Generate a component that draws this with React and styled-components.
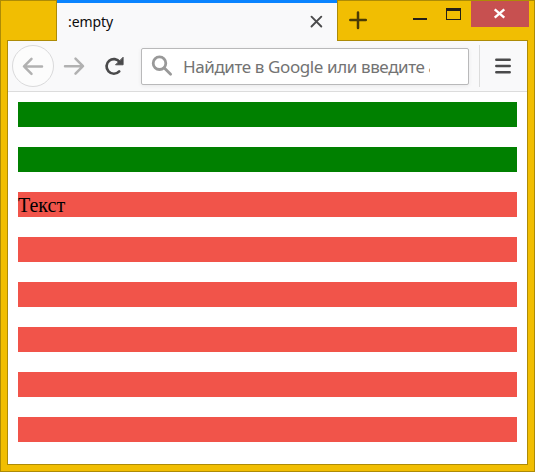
import React from "react";
import styled, { createGlobalStyle } from "styled-components";

const edge = "#ad8b06";
const gold = "#f1be02";

const GlobalStyle = createGlobalStyle`
  *, *::before, *::after { box-sizing: border-box; }
  body { margin: 0; overflow: hidden; }
  svg { display: block; flex: none; }
`;

const BrowserWindow = styled.div`
  width: 535px;
  height: 472px;
  display: flex;
  flex-direction: column;
  padding: 0 6px 6px;
  background: ${gold};
  border: 1px solid ${edge};
  border-top: 0;
  font-family: "Noto Sans", "Open Sans", sans-serif;
`;

const TitleBar = styled.header`
  flex: none;
  display: flex;
  height: 41px;
  margin: 0 -6px;
`;

const TitleStart = styled.div`
  width: 56px;
  padding-left: 6px;
  border-top: 1px solid ${edge};
  border-right: 1px solid ${edge};
  &::after {
    content: "";
    display: block;
    margin-top: 39px;
    height: 1px;
    background: ${edge};
  }
`;

const Tab = styled.div`
  width: 280px;
  display: flex;
  align-items: center;
  justify-content: space-between;
  padding: 0 14px 0 11px;
  border-top: 3px solid #0a84ff;
  background: #f9f9fa;
`;

const TabTitle = styled.span`
  font-size: 14px;
  line-height: 20px;
  letter-spacing: -0.1px;
  color: #0c0c0d;
`;

const TabClose = styled.svg`
  margin-bottom: 2px;
`;

const TitleEnd = styled.div`
  flex: 1;
  display: flex;
  flex-direction: column;
  border-top: 1px solid ${edge};
  border-left: 1px solid ${edge};
  &::after {
    content: "";
    height: 1px;
    margin-right: 6px;
    background: ${edge};
  }
`;

const TitleActions = styled.div`
  flex: 1;
  display: flex;
  align-items: flex-start;
  padding-right: 5px;
`;

const NewTab = styled.div`
  margin: 10px auto 0 11px;
`;

const WindowControls = styled.div`
  display: flex;
`;

const CloseWindow = styled.div`
  width: 58px;
  height: 26px;
  background: #c75050;
`;

const Frame = styled.main`
  flex: 1;
  display: flex;
  flex-direction: column;
  background: #fff;
  border: 1px solid ${edge};
  border-top: 0;
`;

const Toolbar = styled.nav`
  flex: none;
  display: flex;
  align-items: center;
  height: 51px;
  padding-left: 4px;
  background: #f9f9fa;
  border-bottom: 1px solid #dcdcdc;
`;

const BackButton = styled.div`
  width: 42px;
  height: 42px;
  display: grid;
  place-items: center;
  border: 1px solid #dadadb;
  border-radius: 50%;
  background: #fcfcfc;
`;

const ToolButton = styled.div`
  width: 40px;
  display: grid;
  place-items: center;
`;

const AddressBar = styled.div`
  flex: none;
  width: 328px;
  height: 37px;
  display: flex;
  align-items: center;
  margin-left: 7px;
  padding-left: 9px;
  border: 1px solid #b9b9ba;
  border-radius: 2px;
  background: #fff;
  box-shadow: 0 1px 4px rgba(0, 0, 0, 0.07);
`;

const Placeholder = styled.span`
  width: 247px;
  margin-left: 9px;
  padding-top: 1px;
  overflow: hidden;
  white-space: nowrap;
  font-size: 17px;
  line-height: 26px;
  letter-spacing: -0.4px;
  color: #737373;
`;

const MenuButton = styled.div`
  flex: 1;
  height: 42px;
  margin-left: 10px;
  padding-right: 1px;
  display: grid;
  place-items: center;
  border-left: 1px solid #dcdcdc;
`;

const Page = styled.section`
  display: grid;
  grid-auto-rows: 25px;
  gap: 20px;
  padding: 10px;
  font: 20px/27px "Liberation Serif", serif;
  color: #000;
`;

const Bar = styled.div`
  background: ${({ $empty }) => ($empty ? "#008000" : "#f1544a")};
`;

const bars = [
  { empty: true },
  { empty: true },
  { text: "Текст" },
  {},
  {},
  {},
  {},
  {},
];

export default function App() {
  return (
    <>
      <GlobalStyle />
      <BrowserWindow>
        <TitleBar>
          <TitleStart />
          <Tab>
            <TabTitle>:empty</TabTitle>
            <TabClose width="13" height="13" viewBox="0 0 13 13" fill="none" stroke="#4a4a4b" strokeWidth="1.9" strokeLinecap="round">
              <path d="M1.5 1.7l9.8 9.8M11.3 1.7l-9.8 9.8" />
            </TabClose>
          </Tab>
          <TitleEnd>
            <TitleActions>
              <NewTab>
                <svg width="19" height="19" viewBox="0 0 19 19" fill="none" stroke="#4a3b05" strokeWidth="2.5" strokeLinecap="round">
                  <path d="M9 1.5v15.5M1.3 9h15.5" />
                </svg>
              </NewTab>
              <WindowControls>
                <svg width="58" height="26" viewBox="0 0 58 26" fill="#242018">
                  <path d="M0 17h14v2H0zM33 7h15v12H33zM34 10v8h13v-8z" fillRule="evenodd" />
                </svg>
                <CloseWindow>
                  <svg width="58" height="26" viewBox="0 0 58 26" fill="none" stroke="#fff" strokeWidth="2.4">
                    <path d="M23.7 8.3l9.6 8.4M33.3 8.3l-9.6 8.4" />
                  </svg>
                </CloseWindow>
              </WindowControls>
            </TitleActions>
          </TitleEnd>
        </TitleBar>
        <Frame>
          <Toolbar>
            <BackButton>
              <svg width="22" height="20" viewBox="0 0 22 20" fill="none" stroke="#b1b1b1" strokeWidth="2.5" strokeLinecap="round" strokeLinejoin="round">
                <path d="M20 10.4H2.2M9.5 2.9L2 10.4l7.5 7.5" />
              </svg>
            </BackButton>
            <ToolButton>
              <svg width="22" height="20" viewBox="0 0 22 20" fill="none" stroke="#b1b1b1" strokeWidth="2.5" strokeLinecap="round" strokeLinejoin="round">
                <path d="M2 10.2h17.8M12.5 2.7L20 10.2l-7.5 7.5" />
              </svg>
            </ToolButton>
            <ToolButton>
              <svg width="20" height="20" viewBox="0 0 20 20" fill="none" stroke="#4a4a4b" strokeWidth="2.7" strokeLinecap="round">
                <path d="M15.2 15.4A7.3 7.3 0 1 1 15.8 6.2" />
                <path d="M19.1 1.6v7.2h-7.2z" fill="#4a4a4b" strokeWidth="0.9" strokeLinejoin="round" />
              </svg>
            </ToolButton>
            <AddressBar>
              <svg width="23" height="22" viewBox="0 0 23 22" fill="none" stroke="#999" strokeWidth="2.8" strokeLinecap="round">
                <circle cx="8.5" cy="8.2" r="6.3" />
                <path d="M13.3 13l6.3 6.3" />
              </svg>
              <Placeholder>Найдите в Google или введите адрес</Placeholder>
            </AddressBar>
            <MenuButton>
              <svg width="16" height="16" viewBox="0 0 16 16" fill="none" stroke="#4a4a4b" strokeWidth="2.5" strokeLinecap="round">
                <path d="M1.3 1.7h13.4M1.3 8h13.4M1.3 14.3h13.4" />
              </svg>
            </MenuButton>
          </Toolbar>
          <Page>
            {bars.map((bar, i) => (
              <Bar key={i} $empty={bar.empty}>{bar.text}</Bar>
            ))}
          </Page>
        </Frame>
      </BrowserWindow>
    </>
  );
}
